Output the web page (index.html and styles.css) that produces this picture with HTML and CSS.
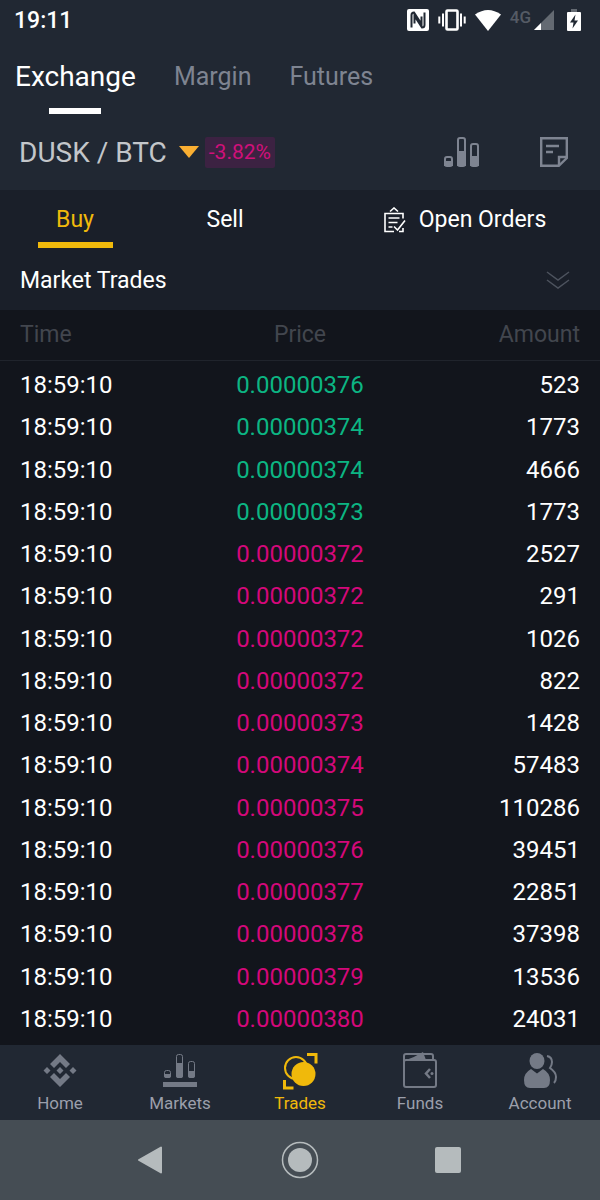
FILE: index.html
```html
<!DOCTYPE html>
<html lang="en">
<head>
  <meta charset="UTF-8">
  <meta name="viewport" content="width=device-width, initial-scale=1">
  <title>DUSK / BTC</title>
  <link rel="stylesheet" href="styles.css">
</head>
<body>
  <div class="status-bar">
    <time class="clock">19:11</time>
    <div class="status-icons">
      <svg width="22" height="22" viewBox="0 0 22 22">
        <rect x="0" y="0" width="22" height="22" rx="2" fill="#fff"/>
        <path d="M4.500 18.500V6Q4.500 3.500 7 3.500L14.500 15V7.500M17.500 3.500V16Q17.500 18.500 15 18.500L7.500 7V14.500" fill="none" stroke="#212833" stroke-width="2"/>
      </svg>
      <svg width="28" height="22" viewBox="0 0 28 22">
        <rect x="8.500" y="1.500" width="11" height="19" rx="1" fill="none" stroke="#fff" stroke-width="2.600"/>
        <path d="M5 4.500v13M23 4.500v13M1.300 7.500v7M26.700 7.500v7" stroke="#fff" stroke-width="2"/>
      </svg>
      <svg class="wifi" width="26" height="21" viewBox="0 0 26 21">
        <path d="M0 4.500Q13-4.500 26 4.500L13 21z" fill="#fff"/>
      </svg>
      <span class="network">4G</span>
      <svg width="20" height="20" viewBox="0 0 20 20">
        <path d="M20 0v20H0z" fill="#646a72"/>
        <path d="M7 13v7H0z" fill="#fff"/>
      </svg>
      <svg class="battery" width="14" height="22" viewBox="0 0 14 22">
        <path d="M4 0h6v3H4z" fill="#646a72"/>
        <rect y="3" width="14" height="19" rx="1" fill="#fff"/>
        <path d="M8.500 5.500L3 13.500h3.500L5.500 19.500L11 11.500H7.500z" fill="#212833"/>
      </svg>
    </div>
  </div>

  <header class="top">
    <nav class="modes">
      <a href="#" class="mode active">Exchange</a>
      <a href="#" class="mode">Margin</a>
      <a href="#" class="mode">Futures</a>
    </nav>
    <div class="pair-bar">
      <button type="button" class="pair">
        DUSK / BTC
        <svg width="20" height="12" viewBox="0 0 20 12"><path d="M0 0h20L10 12z" fill="#faaf32"/></svg>
      </button>
      <span class="change">-3.82%</span>
      <button type="button" class="icon-button chart" aria-label="Chart">
        <svg width="36" height="30" viewBox="0 0 36 30" fill="none" stroke="#7e8491" stroke-width="2">
          <rect x="1" y="20" width="7" height="9" rx="2"/>
          <rect x="14" y="1" width="7" height="28" rx="2"/>
          <rect x="27" y="7" width="7" height="22" rx="2"/>
          <path d="M1 25h7v3H1zM14 15h7v13h-7zM27 20h7v8h-7z" fill="#7e8491"/>
        </svg>
      </button>
      <button type="button" class="icon-button" aria-label="Notes">
        <svg width="28" height="30" viewBox="0 0 28 30" fill="none" stroke="#7e8491" stroke-width="2.400">
          <path d="M1.200 1.200h25.600v19.800l-8 7.800H1.200z"/>
          <path d="M19 28.500v-8.500h8M6 9h13M6 15h7"/>
        </svg>
      </button>
    </div>
  </header>

  <main>
    <div class="panel">
      <nav class="sides">
        <a href="#" class="side active">Buy</a>
        <a href="#" class="side">Sell</a>
        <a href="#" class="side orders">
          <svg width="22" height="26" viewBox="0 0 22 26" fill="none" stroke="#fff" stroke-width="1.600">
            <path d="M10 24.500H1V6.500h18v5M19 21v3.500h-4"/>
            <path d="M6 4.500L10 1l4 3.500M4.500 11h11M4.500 15.500h9M4.500 20h4M10 19.500l3.500 3.500L21 13.500"/>
          </svg>
          Open Orders
        </a>
      </nav>
      <div class="section-title">
        <h1>Market Trades</h1>
        <button type="button" class="icon-button" aria-label="Collapse">
          <svg width="24" height="18" viewBox="0 0 24 18" fill="none" stroke="#4d535e" stroke-width="1.500">
            <path d="M1 1l11 8L23 1M1 9l11 8L23 9"/>
          </svg>
        </button>
      </div>
    </div>

    <table class="trades">
      <thead>
        <tr><th>Time</th><th>Price</th><th>Amount</th></tr>
      </thead>
      <tbody>
        <tr><td>18:59:10</td><td class="up">0.00000376</td><td>523</td></tr>
        <tr><td>18:59:10</td><td class="up">0.00000374</td><td>1773</td></tr>
        <tr><td>18:59:10</td><td class="up">0.00000374</td><td>4666</td></tr>
        <tr><td>18:59:10</td><td class="up">0.00000373</td><td>1773</td></tr>
        <tr><td>18:59:10</td><td class="down">0.00000372</td><td>2527</td></tr>
        <tr><td>18:59:10</td><td class="down">0.00000372</td><td>291</td></tr>
        <tr><td>18:59:10</td><td class="down">0.00000372</td><td>1026</td></tr>
        <tr><td>18:59:10</td><td class="down">0.00000372</td><td>822</td></tr>
        <tr><td>18:59:10</td><td class="down">0.00000373</td><td>1428</td></tr>
        <tr><td>18:59:10</td><td class="down">0.00000374</td><td>57483</td></tr>
        <tr><td>18:59:10</td><td class="down">0.00000375</td><td>110286</td></tr>
        <tr><td>18:59:10</td><td class="down">0.00000376</td><td>39451</td></tr>
        <tr><td>18:59:10</td><td class="down">0.00000377</td><td>22851</td></tr>
        <tr><td>18:59:10</td><td class="down">0.00000378</td><td>37398</td></tr>
        <tr><td>18:59:10</td><td class="down">0.00000379</td><td>13536</td></tr>
        <tr><td>18:59:10</td><td class="down">0.00000380</td><td>24031</td></tr>
      </tbody>
    </table>
  </main>

  <nav class="tab-bar">
    <a href="#" class="tab">
      <svg width="38" height="40" viewBox="0 0 38 40" fill="#747a86">
        <path d="M19 4l10 10-4 4-6-6-6 6-4-4zM19 37l10-10-4-4-6 6-6-6-4 4z"/>
        <path d="M19 17l3.500 3.500L19 24l-3.500-3.500zM6 17l3.500 3.500L6 24l-3.500-3.500zM32 17l3.500 3.500L32 24l-3.500-3.500z"/>
      </svg>
      Home
    </a>
    <a href="#" class="tab">
      <svg width="38" height="40" viewBox="0 0 38 40" fill="#747a86">
        <path d="M2 32h34v5H2z"/>
        <path d="M3 24h7v2q0 2-2 2H5q-2 0-2-2zM15 13h7v13q0 2-2 2h-3q-2 0-2-2zM27 21h7v5q0 2-2 2h-3q-2 0-2-2z"/>
        <g fill="none" stroke="#747a86">
          <rect x="3.500" y="20.500" width="6" height="7" rx="2"/>
          <rect x="15.500" y="4.500" width="6" height="23" rx="2"/>
          <rect x="27.500" y="11.500" width="6" height="16" rx="2"/>
        </g>
      </svg>
      Markets
    </a>
    <a href="#" class="tab active">
      <svg width="38" height="40" viewBox="0 0 38 40">
        <circle cx="15" cy="18" r="11" fill="none" stroke="#f0b90b" stroke-width="2"/>
        <circle cx="22.500" cy="24" r="12" fill="#f0b90b"/>
        <path d="M26 4.500h9v9M3.500 30v8h9" fill="none" stroke="#f0b90b" stroke-width="3"/>
      </svg>
      Trades
    </a>
    <a href="#" class="tab">
      <svg width="38" height="40" viewBox="0 0 38 40" fill="none" stroke="#747a86" stroke-width="2">
        <rect x="3" y="10" width="32" height="27" rx="2"/>
        <path d="M3 13V6q0-2 2-2h25q2 0 2 2v4"/>
        <path d="M5 10Q14 7 22 2l3 8z" fill="#747a86" stroke="none"/>
        <path d="M29 19l-4 4.500 4 4.500" stroke-width="2.500"/>
        <circle cx="31" cy="23.500" r="1.500" fill="#747a86" stroke="none"/>
      </svg>
      Funds
    </a>
    <a href="#" class="tab">
      <svg width="38" height="40" viewBox="0 0 38 40" fill="#747a86">
        <ellipse cx="16" cy="11" rx="7.500" ry="8"/>
        <path d="M10 19l6 4.500 6-4.500q7 4 7 11 0 8-6 8H9q-6 0-6-8 0-7 7-11z"/>
        <path d="M26 6q5 1 5 6 0 3-2 6 6 4 6 9 0 4-2 6" fill="none" stroke="#747a86" stroke-width="2"/>
      </svg>
      Account
    </a>
  </nav>

  <div class="system-bar">
    <button type="button" class="icon-button" aria-label="Back">
      <svg width="28" height="28" viewBox="0 0 28 28"><path d="M1 14L23 1.500v25z" fill="#b5bbbd" stroke="#b5bbbd" stroke-width="2" stroke-linejoin="round"/></svg>
    </button>
    <button type="button" class="icon-button" aria-label="Home screen">
      <svg width="38" height="38" viewBox="0 0 38 38"><circle cx="19" cy="19" r="17.500" fill="none" stroke="#b5bbbd" stroke-width="1.500"/><circle cx="19" cy="19" r="12" fill="#b5bbbd"/></svg>
    </button>
    <button type="button" class="icon-button" aria-label="Recent apps">
      <svg width="26" height="26" viewBox="0 0 26 26"><rect width="26" height="26" rx="2" fill="#b5bbbd"/></svg>
    </button>
  </div>
</body>
</html>
```
FILE: styles.css
```css
* {
  margin: 0;
  padding: 0;
  box-sizing: border-box;
}

body {
  display: flex;
  flex-direction: column;
  min-height: 100vh;
  background-color: #12151c;
  color: #ffffff;
  font-family: Roboto, sans-serif;
  font-size: 23px;
}

a {
  color: inherit;
  text-decoration: none;
}

button {
  border: none;
  background: none;
  color: inherit;
  font: inherit;
  cursor: pointer;
}

svg {
  display: block;
  flex: none;
}

/* Status bar */
.status-bar {
  display: flex;
  align-items: center;
  justify-content: space-between;
  height: 40px;
  padding: 0 19px 0 14px;
  background-color: #212833;
}

.clock {
  font-size: 23px;
  font-weight: 500;
}

.status-icons {
  display: flex;
  align-items: center;
  gap: 9px;
}

.network {
  align-self: flex-start;
  margin-right: -6px;
  color: #555b65;
  font-size: 17px;
  font-weight: 500;
  line-height: 16px;
}

.battery {
  margin-left: 4px;
}

/* Header */
.top {
  background-color: #212833;
}

.modes {
  display: flex;
  gap: 38px;
  height: 74px;
  padding: 0 15px;
  color: #7e8491;
  font-size: 25px;
  line-height: 74px;
}

.mode.active {
  position: relative;
  color: #ffffff;
  font-size: 28px;
}

.mode.active::after {
  content: "";
  position: absolute;
  left: 50%;
  bottom: 0;
  width: 52px;
  height: 6px;
  margin-left: -26px;
  background-color: #ffffff;
}

.pair-bar {
  display: flex;
  align-items: center;
  height: 76px;
  padding: 0 32px 0 19px;
}

.pair {
  display: flex;
  align-items: center;
  gap: 12px;
  color: #c3c6ca;
  font-size: 28px;
}

.change {
  margin: 0 auto 0 6px;
  padding: 0 4px;
  border-radius: 2px;
  background-color: #3c2242;
  color: #d0107a;
  font-size: 21px;
  line-height: 31px;
}

.chart {
  margin-right: 60px;
}

/* Buy / sell tabs */
main {
  display: flex;
  flex: 1;
  flex-direction: column;
  padding-bottom: 9px;
}

.panel {
  background-color: #1a1f29;
}

.sides {
  display: grid;
  grid-template-columns: 1fr 1fr 2fr;
  height: 60px;
  line-height: 60px;
  text-align: center;
}

.side.active {
  position: relative;
  color: #f0b90b;
}

.side.active::after {
  content: "";
  position: absolute;
  left: 25%;
  right: 25%;
  bottom: 2px;
  height: 6px;
  background-color: #f0b90b;
}

.orders {
  display: flex;
  align-items: center;
  justify-content: center;
  gap: 13px;
  padding-left: 30px;
}

.section-title {
  display: flex;
  align-items: center;
  justify-content: space-between;
  height: 60px;
  padding: 0 30px 0 20px;
}

.section-title h1 {
  font-size: 23px;
  font-weight: 400;
}

/* Trades */
.trades {
  flex: 1;
  width: 100%;
  border-collapse: collapse;
  table-layout: fixed;
}

.trades th {
  height: 50px;
  border-bottom: 1px solid #20242c;
  color: #42464e;
  font-weight: 400;
}

.trades td {
  height: 42px;
  padding-top: 8px;
  font-size: 24px;
  line-height: 28px;
}

.trades th:first-child,
.trades td:first-child {
  padding-left: 20px;
  text-align: left;
}

.trades td:nth-child(2) {
  text-align: center;
}

.trades th:last-child,
.trades td:last-child {
  padding-right: 20px;
  text-align: right;
}

.trades .up {
  color: #0cb583;
}

.trades .down {
  color: #d4087a;
}

/* Bottom navigation */
.tab-bar {
  display: grid;
  grid-template-columns: repeat(5, 1fr);
  height: 75px;
  padding-top: 5px;
  background-color: #212833;
}

.tab {
  display: flex;
  flex-direction: column;
  align-items: center;
  gap: 3px;
  color: #9b9fab;
  font-size: 17px;
  line-height: 20px;
}

.tab.active {
  color: #f0b90b;
}

.system-bar {
  display: grid;
  grid-template-columns: repeat(3, 148px);
  align-items: center;
  justify-content: center;
  height: 80px;
  background-color: #454d54;
}

.system-bar svg {
  margin: 0 auto;
}
```
